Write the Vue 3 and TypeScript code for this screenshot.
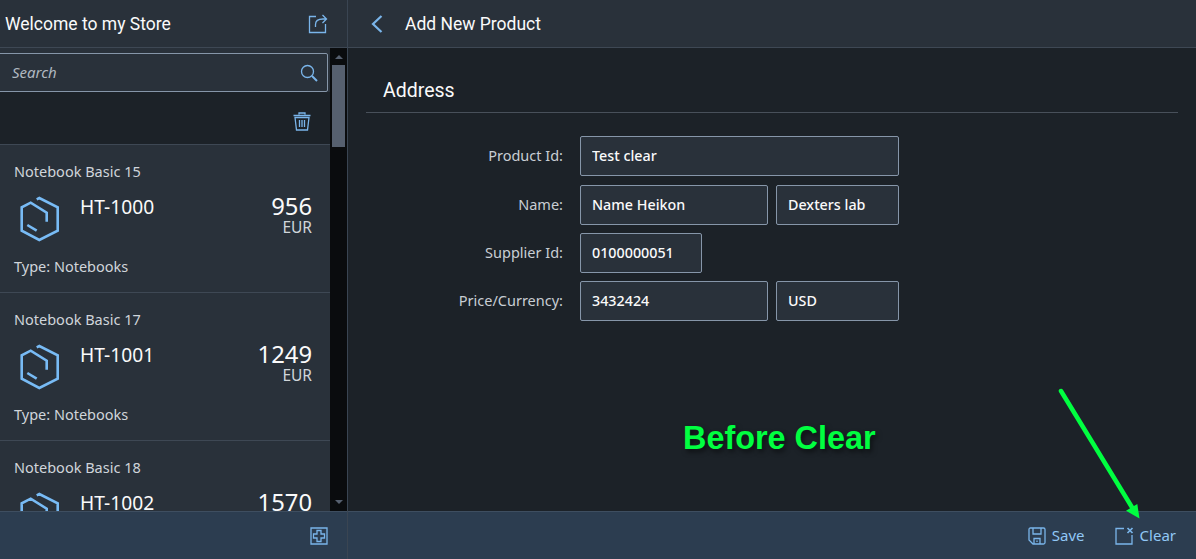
<script setup lang="ts">
interface Product {
  name: string
  id: string
  price: number
}

const products: Product[] = [
  { name: 'Notebook Basic 15', id: 'HT-1000', price: 956 },
  { name: 'Notebook Basic 17', id: 'HT-1001', price: 1249 },
  { name: 'Notebook Basic 18', id: 'HT-1002', price: 1570 }
]
</script>

<template>
  <div class="page">
    <aside class="master">
      <header class="bar">
        <span class="bar-title welcome">Welcome to my Store</span>
        <svg class="share" width="20" height="20" viewBox="0 0 20 20" fill="none" stroke="currentColor" stroke-width="1.3">
          <path d="M8 2.5H1.5V18.5H17.5V10" />
          <path d="M7.5 13V10.5C7.5 7 10 5 15 5H18M14.5 1L18.5 5L14.5 9" />
        </svg>
      </header>
      <div class="master-body">
        <div class="master-content">
          <div class="search-wrap">
            <div class="search">
              <input class="search-input" placeholder="Search" />
              <svg width="18" height="18" viewBox="0 0 18 18" fill="none" stroke="currentColor">
                <circle cx="7.5" cy="7.5" r="6" stroke-width="1.3" />
                <path d="M12 12L17 17" stroke-width="2" />
              </svg>
            </div>
          </div>
          <div class="tools">
            <svg width="18" height="19" viewBox="0 0 18 19" fill="none" stroke="currentColor" stroke-width="1.3">
              <path d="M0.5 3.5H17.5M6 2.5V1H12V2.5" />
              <path d="M2 5.5H16L14.5 18H3.5Z" />
              <path d="M6.5 8V15M9 8V15M11.5 8V15" />
            </svg>
          </div>
          <ul class="list">
            <li v-for="p in products" :key="p.id" class="item">
              <div class="item-name">{{ p.name }}</div>
              <div class="item-main">
                <svg class="cube" width="40" height="46" viewBox="10 6 40 46" fill="none" stroke="currentColor" stroke-width="2.6">
                  <path d="M26.7 9.3L29.3 8L47.7 17.3V40.7L29.3 50L11.7 40.7V17.3L20.7 12.7L36.7 22.7V31.7" />
                  <path d="M17.3 35L26.7 40.7" />
                </svg>
                <div class="item-id">{{ p.id }}</div>
                <div class="item-price">
                  <div class="amount">{{ p.price }}</div>
                  <div class="currency">EUR</div>
                </div>
              </div>
              <div class="item-type">Type: Notebooks</div>
            </li>
          </ul>
        </div>
        <div class="scrollbar">
          <span class="arrow up"></span>
          <span class="thumb"></span>
          <span class="spacer"></span>
          <span class="arrow down"></span>
        </div>
      </div>
      <footer class="foot foot-left">
        <svg width="18" height="18" viewBox="0 0 18 18" fill="none" stroke="currentColor" stroke-width="1.3">
          <path d="M1 1H17V17H1Z" />
          <path d="M7 3.5H11V7H14.5V11H11V14.5H7V11H3.5V7H7Z" />
        </svg>
      </footer>
    </aside>

    <main class="detail">
      <header class="bar detail-bar">
        <svg class="back" width="12" height="18" viewBox="0 0 12 18" fill="none" stroke="currentColor" stroke-width="2.2">
          <path d="M10.5 1L2 9L10.5 17" />
        </svg>
        <span class="bar-title">Add New Product</span>
      </header>
      <section class="detail-body">
        <h2 class="section-title">Address</h2>
        <form class="form">
          <label class="lbl">Product Id:</label>
          <input class="field span-all" value="Test clear" />
          <label class="lbl">Name:</label>
          <input class="field" value="Name Heikon" />
          <input class="field" value="Dexters lab" />
          <label class="lbl">Supplier Id:</label>
          <input class="field supplier" value="0100000051" />
          <label class="lbl">Price/Currency:</label>
          <input class="field" value="3432424" />
          <input class="field" value="USD" />
        </form>
      </section>
      <footer class="foot foot-right">
        <button class="act save" type="button">
          <svg width="18" height="18" viewBox="0 0 18 18" fill="none" stroke="currentColor" stroke-width="1.3">
            <path d="M2.5 1H15.5Q17 1 17 2.5V15.5Q17 17 15.5 17H5L1 13V2.5Q1 1 2.5 1Z" />
            <path d="M5 1V7H13V1M6 17V11.5H12V17M9 13.5V15" />
          </svg>
          <span class="act-text">Save</span>
        </button>
        <button class="act" type="button">
          <svg width="19" height="18" viewBox="0 0 19 18" fill="none" stroke="currentColor" stroke-width="1.3">
            <path d="M9 1.5H1V17H17V8" />
            <path d="M12.5 1L17.5 6M17.5 1L12.5 6" stroke-width="1.7" />
          </svg>
          <span class="act-text">Clear</span>
        </button>
      </footer>
    </main>

    <!-- annotation drawn over the screenshot -->
    <div class="note">Before Clear</div>
    <svg class="pointer" width="1196" height="559" viewBox="0 0 1196 559" fill="none">
      <path d="M1061 391L1133 509" stroke="#00ff40" stroke-width="4.5" stroke-linecap="round" />
      <path d="M1139.5 518.5L1126 510.7L1137.3 504Z" fill="#00ff40" />
    </svg>
  </div>
</template>

<style>
html, body {
  background: #1c2228;
}
</style>

<style scoped>
.page {
  position: relative;
  display: flex;
  width: 1196px;
  height: 559px;
  overflow: hidden;
  background: #1c2228;
  font-family: "Noto Sans", "Liberation Sans", sans-serif;
  color: #fafafa;
}

.master {
  display: flex;
  flex-direction: column;
  width: 348px;
  flex: none;
  border-right: 1px solid #3a4552;
  box-sizing: border-box;
}

.detail {
  display: flex;
  flex-direction: column;
  flex: 1;
  min-width: 0;
}

.bar {
  display: flex;
  align-items: center;
  justify-content: space-between;
  height: 48px;
  flex: none;
  box-sizing: border-box;
  padding: 0 19px 0 5px;
  background: #29313a;
  border-bottom: 1px solid #3e4854;
}

.bar-title {
  font-family: Roboto, "Noto Sans", sans-serif;
  font-size: 17.5px;
  color: #fafafa;
}

.share {
  color: #7ab5ea;
}

.master-body {
  display: flex;
  flex: 1;
  min-height: 0;
}

.master-content {
  width: 330px;
  flex: none;
  overflow: hidden;
}

.search-wrap {
  height: 44px;
  box-sizing: border-box;
  padding-top: 5px;
  background: #29313a;
}

.search {
  display: flex;
  align-items: center;
  height: 39px;
  width: 330px;
  margin-left: -2px;
  box-sizing: border-box;
  padding: 0 9px 0 13px;
  background: #29313a;
  border: 1px solid #8696a9;
  border-radius: 2px;
  color: #7ab5ea;
}

.search-input {
  flex: 1;
  min-width: 0;
  margin-bottom: 2px;
  background: none;
  border: 0;
  outline: 0;
  padding: 0;
  font: italic 15px "Noto Sans", sans-serif;
  color: #b8c0c8;
}

.search-input::placeholder {
  color: #b0b8c0;
  opacity: 1;
}

.tools {
  display: flex;
  align-items: center;
  justify-content: flex-end;
  height: 53px;
  box-sizing: border-box;
  padding: 6px 19px 0 0;
  background: #1c2228;
  border-bottom: 1px solid #3e4854;
  color: #7ab5ea;
}

.list {
  list-style: none;
  margin: 0;
  padding: 0;
}

.item {
  height: 148px;
  box-sizing: border-box;
  padding: 17px 18px 0 14px;
  background: #29313a;
  border-bottom: 1px solid #3e4854;
}

.item-name,
.item-type {
  font-size: 14.5px;
  line-height: 18px;
  color: #d0d5da;
}

.item-main {
  display: flex;
  height: 70px;
  margin-top: 7px;
}

.cube {
  margin: 9px 0 0 6px;
  color: #78bbf5;
}

.item-id {
  margin: 6px 0 0 20px;
  font-size: 19.2px;
  line-height: 28px;
}

.item-price {
  margin: 6px 0 0 auto;
  text-align: right;
}

.amount {
  font-size: 23.8px;
  line-height: 26px;
}

.currency {
  font-size: 15.5px;
  line-height: 17px;
  color: #d0d5da;
}

.scrollbar {
  display: flex;
  flex-direction: column;
  align-items: center;
  width: 17px;
  flex: none;
  background: #0a0c0e;
}

.arrow {
  width: 0;
  height: 0;
  flex: none;
  border-left: 4px solid transparent;
  border-right: 4px solid transparent;
}

.up {
  margin-top: 7px;
  border-bottom: 4px solid #56606f;
}

.down {
  margin-bottom: 7px;
  border-top: 4px solid #56606f;
}

.thumb {
  width: 13px;
  height: 82px;
  flex: none;
  margin-top: 6px;
  background: #56606f;
}

.spacer {
  flex: 1;
}

.foot {
  display: flex;
  align-items: center;
  height: 48px;
  flex: none;
  box-sizing: border-box;
  background: #2c3d50;
  border-top: 1px solid #3e4e60;
  color: #7ab5ea;
}

.foot-left {
  justify-content: flex-end;
  padding-right: 19px;
}

.foot-right {
  justify-content: flex-end;
  padding-right: 20px;
}

.detail-bar {
  justify-content: flex-start;
  gap: 22px;
  padding-left: 23px;
}

.back {
  color: #7ab5ea;
}

.detail-body {
  flex: 1;
  padding: 24px 18px 0;
}

.section-title {
  margin: 0;
  height: 41px;
  padding-left: 17px;
  box-sizing: border-box;
  border-bottom: 1px solid #48505a;
  font-family: Roboto, "Noto Sans", sans-serif;
  font-size: 19.5px;
  font-weight: 400;
  line-height: 38px;
}

.form {
  display: grid;
  grid-template-columns: 206px 188px 123px;
  grid-template-rows: 41px 40px 40px 40px;
  column-gap: 8px;
  row-gap: 8px;
  margin-top: 23px;
  align-items: start;
}

.lbl {
  padding-right: 9px;
  text-align: right;
  font-size: 14.5px;
  line-height: 38px;
  color: #c8ced4;
}

.field {
  height: 40px;
  width: 100%;
  min-width: 0;
  box-sizing: border-box;
  padding: 0 11px 2px;
  background: #29313a;
  border: 1px solid #8696a9;
  border-radius: 2px;
  outline: 0;
  font: 500 14.3px "Noto Sans", sans-serif;
  color: #fafafa;
}

.span-all {
  grid-column: 2 / 4;
}

.supplier {
  width: 122px;
  grid-column: 2 / 4;
}

.act {
  display: flex;
  align-items: center;
  gap: 6px;
  padding: 0;
  background: none;
  border: 0;
  font: 15px "Noto Sans", sans-serif;
  color: #91c8f6;
}

.act-text {
  margin-bottom: 2px;
}

.act svg {
  color: #7ab5ea;
}

.save {
  margin-right: 30px;
}

.note {
  position: absolute;
  left: 683px;
  top: 419px;
  font: bold 32.4px/38px "Liberation Sans", sans-serif;
  color: #00ff40;
  text-shadow: 2px 3px 5px rgba(0, 0, 0, 0.55);
  white-space: nowrap;
}

.pointer {
  position: absolute;
  left: 0;
  top: 0;
  pointer-events: none;
}
</style>
